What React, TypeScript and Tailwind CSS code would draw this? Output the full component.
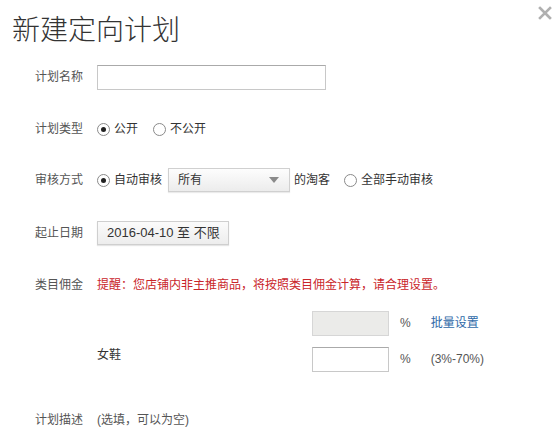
import React from 'react';

const Radio = ({ checked }: { checked?: boolean }) => (
  <span className="w-[13px] h-[13px] rounded-full border border-[#8a8a8a] bg-white flex items-center justify-center shrink-0">
    {checked && <span className="w-[5px] h-[5px] rounded-full bg-[#222]" />}
  </span>
);

const Row = ({ label, top, children }: { label: string; top: string; children?: React.ReactNode }) => (
  <div className={`flex items-center h-[26px] ${top}`}>
    <span className="w-[62px] pl-[35px] shrink-0 box-content text-[#555]">{label}</span>
    {children}
  </div>
);

const App = () => {
  return (
    <div
      className="relative w-[560px] h-[438px] bg-white overflow-hidden text-[12px] text-[#333]"
      style={{ fontFamily: '"Liberation Sans", "Noto Sans CJK SC", sans-serif' }}
    >
      <button className="absolute left-[538px] top-[6px] w-[14px] h-[14px]">
        <svg width="14" height="14" viewBox="0 0 14 14">
          <path d="M2 2 L12 12 M12 2 L2 12" stroke="#b0b0b0" strokeWidth="2.6" strokeLinecap="square" />
        </svg>
      </button>

      <h1 className="mt-[13px] ml-[12px] text-[28px] leading-[30px] text-[#333] font-light" style={{ fontFamily: '"Noto Sans CJK SC", sans-serif' }}>
        新建定向计划
      </h1>

      <Row label="计划名称" top="mt-[21px]">
        <input className="w-[229px] h-[25px] border border-[#c8c8c8] border-t-[#aaa] outline-none px-2" />
      </Row>

      <Row label="计划类型" top="mt-[26px]">
        <label className="flex items-center gap-[4px]">
          <Radio checked />
          <span>公开</span>
        </label>
        <label className="flex items-center gap-[4px] ml-[15px]">
          <Radio />
          <span>不公开</span>
        </label>
      </Row>

      <Row label="审核方式" top="mt-[25px]">
        <label className="flex items-center gap-[4px]">
          <Radio checked />
          <span>自动审核</span>
        </label>
        <div className="ml-[6px] w-[122px] h-[24px] border border-[#d0d0d0] bg-gradient-to-b from-[#fdfdfd] to-[#ececec] flex items-center justify-between pl-[9px] pr-[10px] shadow-[0_1px_1px_rgba(0,0,0,0.08)]">
          <span className="text-[#333]">所有</span>
          <svg width="10" height="6" viewBox="0 0 10 6">
            <path d="M0 0 H10 L5 6 Z" fill="#8a8a8a" />
          </svg>
        </div>
        <span className="ml-[4px]">的淘客</span>
        <label className="flex items-center gap-[4px] ml-[14px]">
          <Radio />
          <span>全部手动审核</span>
        </label>
      </Row>

      <Row label="起止日期" top="mt-[27px]">
        <button className="h-[24px] w-[132px] border border-[#cfcfcf] bg-gradient-to-b from-[#fbfbfb] to-[#ededed] text-[13px] text-[#333] text-left pl-[9px] shadow-[0_1px_1px_rgba(0,0,0,0.1)]">
          2016-04-10 至 不限
        </button>
      </Row>

      <Row label="类目佣金" top="mt-[26px]">
        <span className="text-[#c9252a]">提醒：您店铺内非主推商品，将按照类目佣金计算，请合理设置。</span>
      </Row>

      <div className="flex items-center h-[26px] mt-[12px] pl-[312px]">
        <input disabled className="w-[77px] h-[25px] border border-[#d6d6d6] bg-[#ebebe9] outline-none" />
        <span className="ml-[11px] text-[#555]">%</span>
        <a className="ml-[20px] text-[#2f6aa8] cursor-pointer">批量设置</a>
      </div>

      <div className="flex items-center h-[26px] mt-[10px] pl-[97px]">
        <span className="w-[215px] -mt-[8px]">女鞋</span>
        <input className="w-[77px] h-[25px] border border-[#c8c8c8] border-t-[#aaa] outline-none" />
        <span className="ml-[11px] text-[#555]">%</span>
        <span className="ml-[20px] text-[#555]">(3%-70%)</span>
      </div>

      <Row label="计划描述" top="mt-[35px]">
        <span className="text-[#555]">(选填，可以为空)</span>
      </Row>

      <div className="ml-[97px] mt-[5px] w-[455px] h-[60px] border border-[#efebe0] bg-[#fffefa]" />
    </div>
  );
};

export default App;
